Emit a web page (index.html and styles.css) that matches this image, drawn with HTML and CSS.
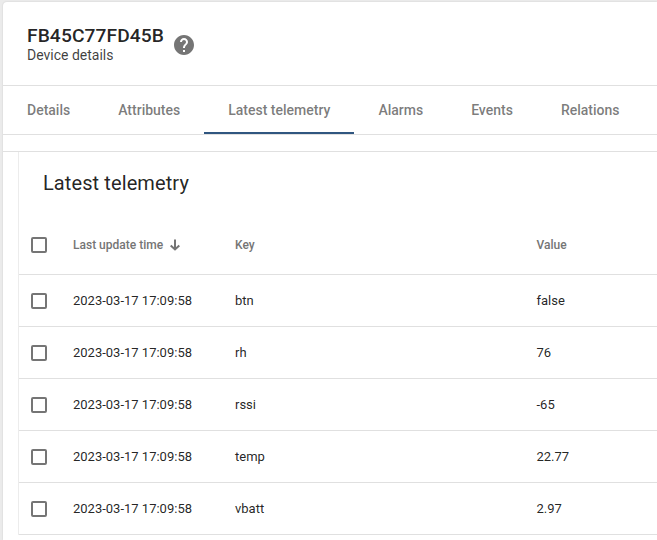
FILE: index.html
```html
<!DOCTYPE html>
<html lang="en">
<head>
<meta charset="utf-8">
<title>Device details</title>
<link rel="stylesheet" href="styles.css">
</head>
<body>
<main class="drawer">
  <header class="header">
    <div>
      <h1 class="title">FB45C77FD45B</h1>
      <div class="subtitle">Device details</div>
    </div>
    <svg class="help" viewBox="0 0 24 24"><path d="M12 2C6.480 2 2 6.480 2 12s4.480 10 10 10 10-4.480 10-10S17.520 2 12 2zm1 17h-2v-2h2v2zm2.070-7.750l-.9.920C13.450 12.900 13 13.500 13 15h-2v-.5c0-1.100.45-2.100 1.170-2.830l1.240-1.260c.37-.36.59-.86.59-1.410 0-1.100-.9-2-2-2s-2 .9-2 2H8c0-2.210 1.790-4 4-4s4 1.790 4 4c0 .88-.36 1.680-.93 2.250z"/></svg>
  </header>
  <nav class="tabs">
    <a class="tab"><span>Details</span></a>
    <a class="tab"><span>Attributes</span></a>
    <a class="tab active"><span>Latest telemetry</span></a>
    <a class="tab"><span>Alarms</span></a>
    <a class="tab"><span>Events</span></a>
    <a class="tab"><span>Relations</span></a>
  </nav>
  <div class="content">
  <section class="panel">
    <h2 class="panel-title">Latest telemetry</h2>
    <div class="row head">
      <span class="box"></span>
      <span class="sort">Last update time <svg class="arrow" viewBox="0 0 12 12"><path d="M6 0.500v10M1.700 6.500L6 10.500L10.300 6.500"/></svg></span>
      <span>Key</span><span>Value</span>
    </div>
    <div class="row"><span class="box"></span><span>2023-03-17 17:09:58</span><span>btn</span><span>false</span></div>
    <div class="row"><span class="box"></span><span>2023-03-17 17:09:58</span><span>rh</span><span>76</span></div>
    <div class="row"><span class="box"></span><span>2023-03-17 17:09:58</span><span>rssi</span><span>-65</span></div>
    <div class="row"><span class="box"></span><span>2023-03-17 17:09:58</span><span>temp</span><span>22.77</span></div>
    <div class="row"><span class="box"></span><span>2023-03-17 17:09:58</span><span>vbatt</span><span>2.97</span></div>
  </section>
  </div>
</main>
</body>
</html>
```
FILE: styles.css
```css
* { box-sizing: border-box; }
body {
  margin: 0;
  height: 540px;
  overflow: hidden;
  padding: 2px 0 0 3px;
  background: #ebebeb;
  font-family: Roboto, sans-serif;
  color: rgba(0, 0, 0, .87);
}
.drawer {
  height: 538px;
  background: #fff;
  border-top-left-radius: 4px;
  overflow: hidden;
  box-shadow: 0 0 2px rgba(0, 0, 0, .14);
}
.header {
  height: 84px;
  padding: 23px 24px 0;
  display: flex;
  gap: 8px;
  border-bottom: 1px solid #e0e0e0;
}
.title { margin: 0; font-size: 19.2px; line-height: 22px; font-weight: 500; letter-spacing: .005em; }
.subtitle { font-size: 14px; line-height: 16px; color: rgba(0, 0, 0, .76); }
.help { width: 24px; height: 24px; margin-top: 8px; fill: #757575; }
.tabs { display: flex; height: 49px; border-bottom: 1px solid #e0e0e0; }
.tab {
  padding: 0 24px;
  font-size: 14px;
  line-height: 48px;
  font-weight: 500;
  border-bottom: 2px solid transparent;
}
.tab span { opacity: .6; }
.tab.active { border-bottom-color: #305680; }
.content { margin-top: 16px; padding-left: 15px; border-top: 1px solid #e0e0e0; }
.panel { border-left: 1px solid #ececec; }
.panel-title {
  margin: 0;
  padding: 0 24px;
  height: 64px;
  font-size: 20px;
  line-height: 62px;
  font-weight: 400;
  letter-spacing: .005em;
}
.row {
  display: grid;
  grid-template-columns: 42px 162px 301.500px 1fr;
  align-items: center;
  height: 52px;
  padding-left: 12px;
  border-bottom: 1px solid #e0e0e0;
  font-size: 13px;
}
.head { height: 59px; font-size: 12px; font-weight: 500; color: #757575; }
.box { width: 16px; height: 16px; border: 2px solid #757575; border-radius: 2px; }
.sort { display: flex; align-items: center; gap: 6px; }
.arrow { width: 12px; height: 12px; fill: none; stroke: #757575; stroke-width: 2; }
```
